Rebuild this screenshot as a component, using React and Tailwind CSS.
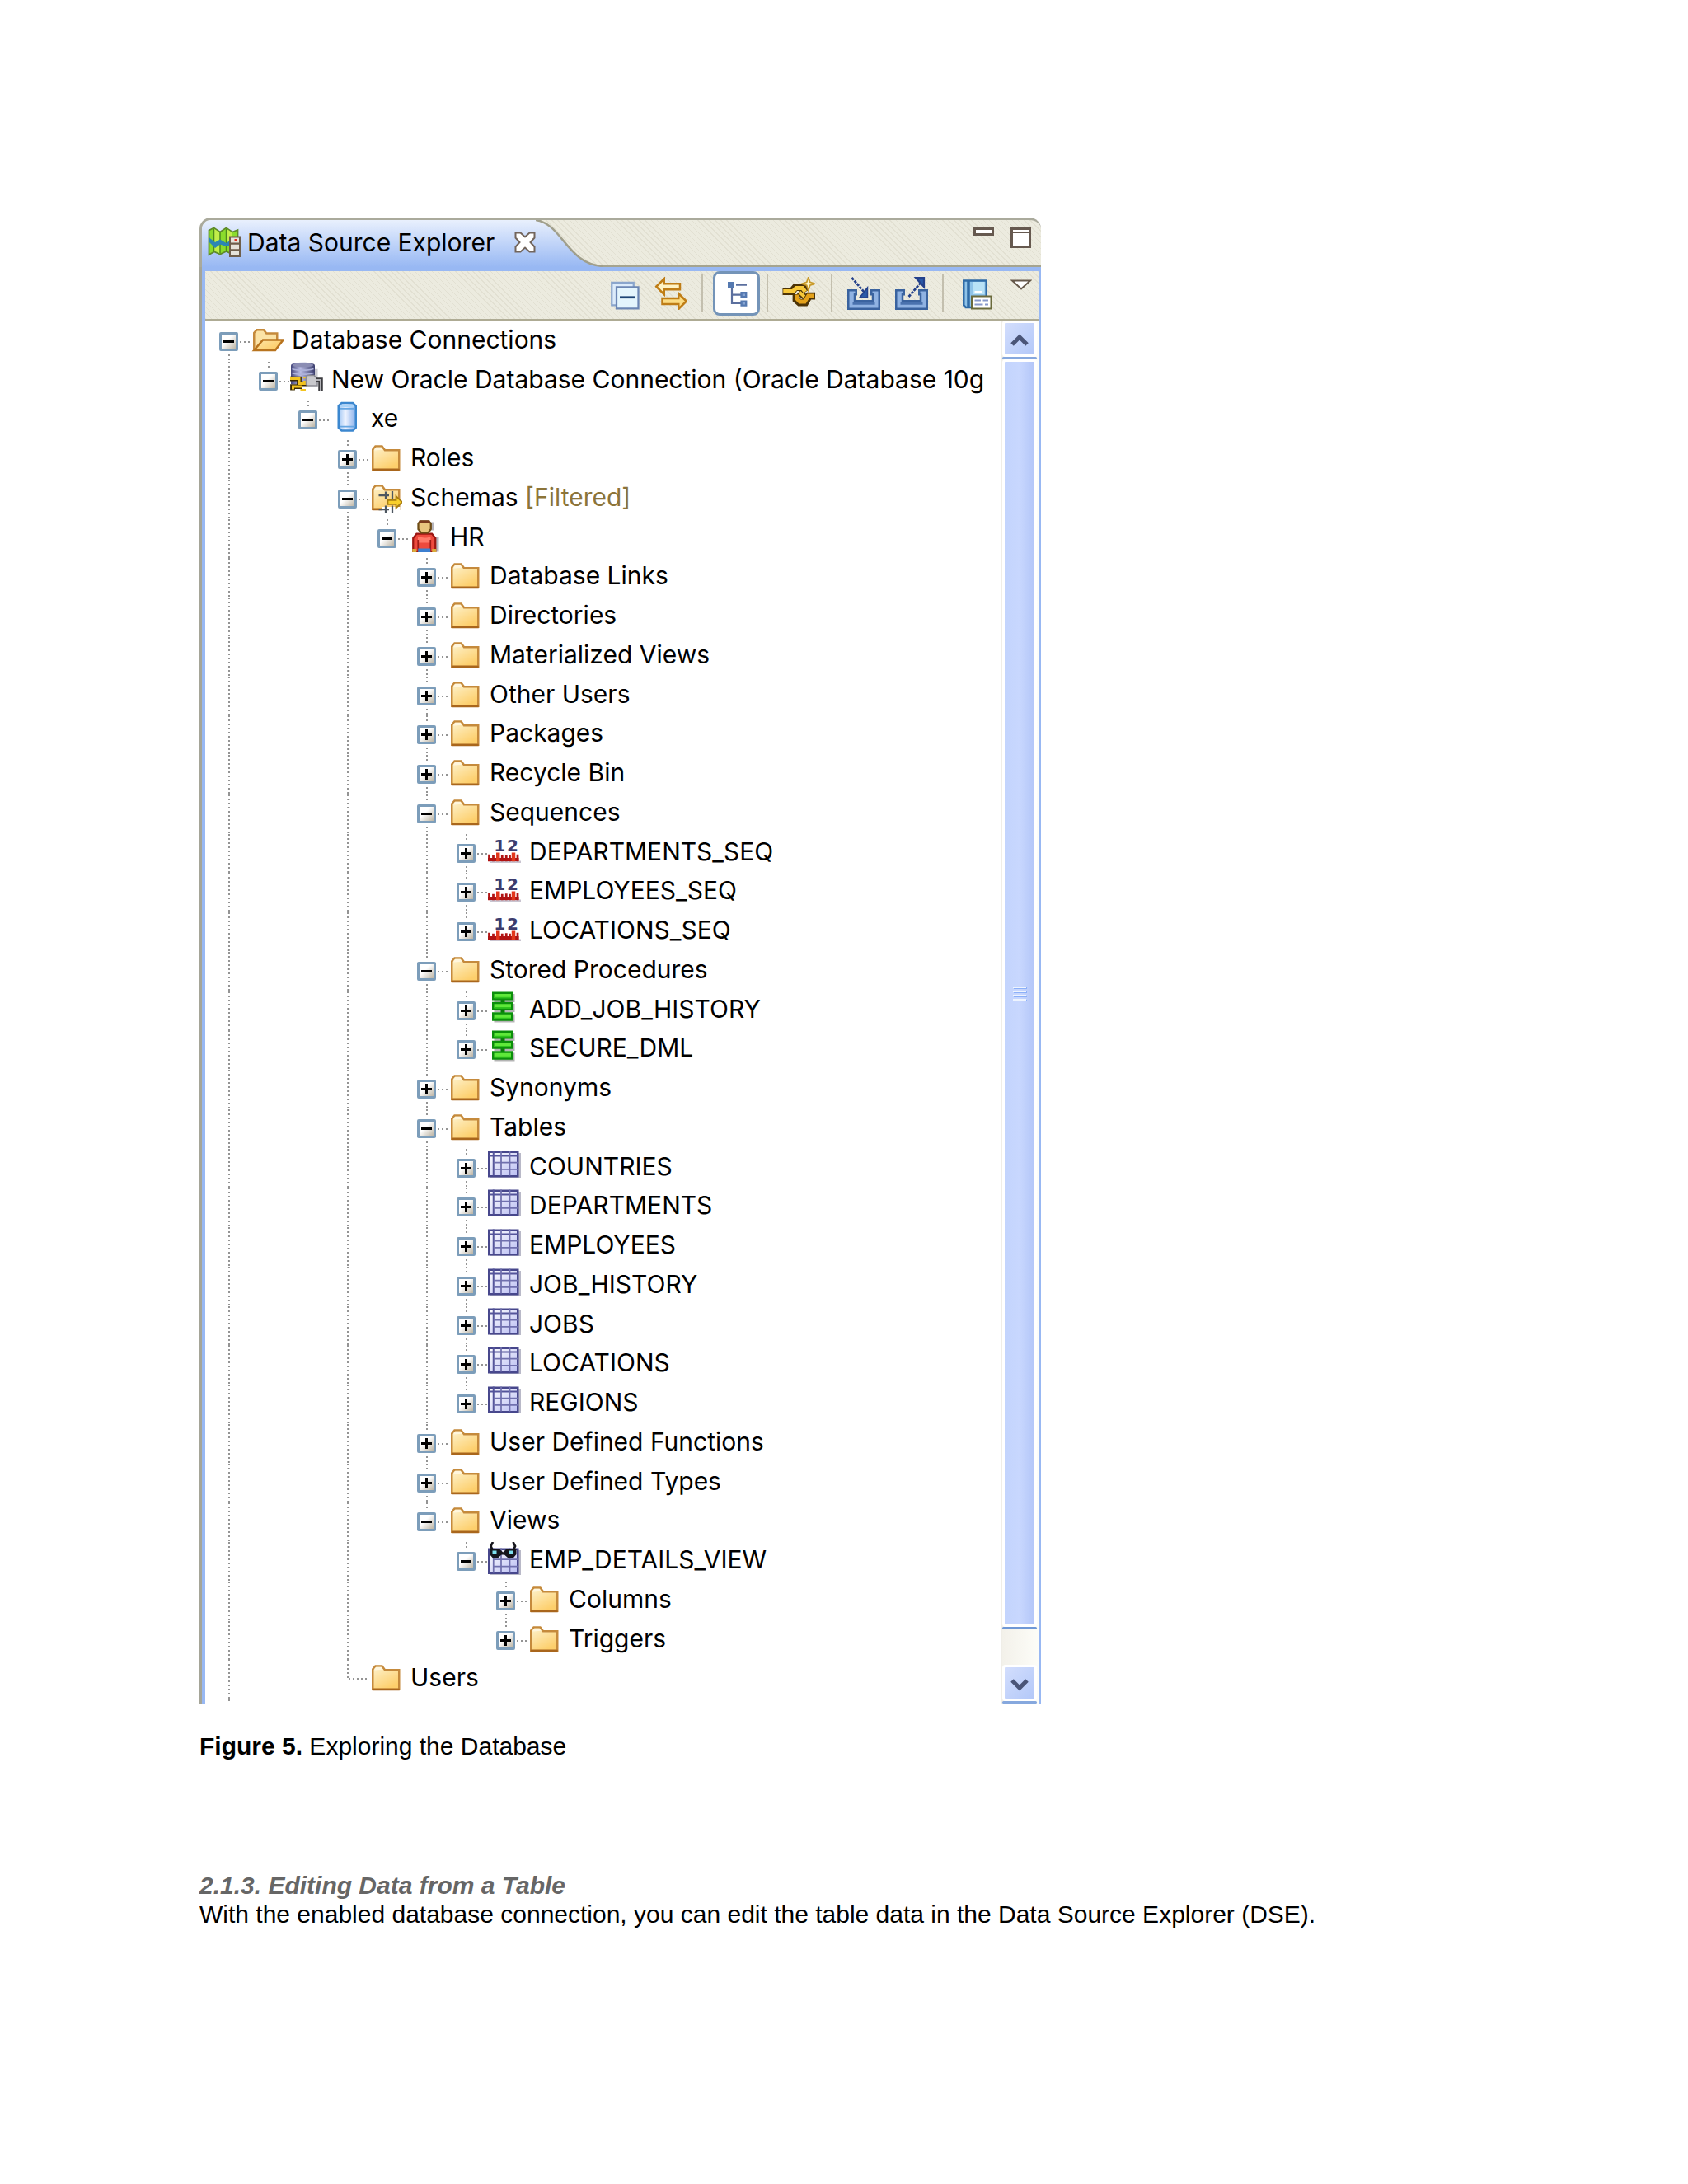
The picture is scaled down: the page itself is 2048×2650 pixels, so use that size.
import { useState } from 'react';

const tree = [
  {
    label: 'Database Connections',
    icon: 'open',
    children: [
      {
        label: 'New Oracle Database Connection (Oracle Database 10g',
        icon: 'oracle',
        children: [
          {
            label: 'xe',
            icon: 'db',
            children: [
              { label: 'Roles', closed: true },
              {
                label: 'Schemas',
                note: '[Filtered]',
                icon: 'filtered',
                children: [
                  {
                    label: 'HR',
                    icon: 'person',
                    children: [
                      { label: 'Database Links', closed: true },
                      { label: 'Directories', closed: true },
                      { label: 'Materialized Views', closed: true },
                      { label: 'Other Users', closed: true },
                      { label: 'Packages', closed: true },
                      { label: 'Recycle Bin', closed: true },
                      {
                        label: 'Sequences',
                        children: [
                          { label: 'DEPARTMENTS_SEQ', icon: 'seq', closed: true },
                          { label: 'EMPLOYEES_SEQ', icon: 'seq', closed: true },
                          { label: 'LOCATIONS_SEQ', icon: 'seq', closed: true },
                        ],
                      },
                      {
                        label: 'Stored Procedures',
                        children: [
                          { label: 'ADD_JOB_HISTORY', icon: 'proc', closed: true },
                          { label: 'SECURE_DML', icon: 'proc', closed: true },
                        ],
                      },
                      { label: 'Synonyms', closed: true },
                      {
                        label: 'Tables',
                        children: [
                          { label: 'COUNTRIES', icon: 'table', closed: true },
                          { label: 'DEPARTMENTS', icon: 'table', closed: true },
                          { label: 'EMPLOYEES', icon: 'table', closed: true },
                          { label: 'JOB_HISTORY', icon: 'table', closed: true },
                          { label: 'JOBS', icon: 'table', closed: true },
                          { label: 'LOCATIONS', icon: 'table', closed: true },
                          { label: 'REGIONS', icon: 'table', closed: true },
                        ],
                      },
                      { label: 'User Defined Functions', closed: true },
                      { label: 'User Defined Types', closed: true },
                      {
                        label: 'Views',
                        children: [
                          {
                            label: 'EMP_DETAILS_VIEW',
                            icon: 'view',
                            children: [
                              { label: 'Columns', closed: true },
                              { label: 'Triggers', closed: true },
                            ],
                          },
                        ],
                      },
                    ],
                  },
                ],
              },
              { label: 'Users' },
            ],
          },
        ],
      },
    ],
  },
];

// one entry per visible row; guides[i] says if the line of level i runs through it
function flatten(nodes, guides = []) {
  return nodes.flatMap((node, i) => {
    const root = guides.length === 0;
    const more = root || i < nodes.length - 1;
    return [{ ...node, guides, more, root }, ...flatten(node.children ?? [], [...guides, more])];
  });
}

const rows = flatten(tree);

const dotsY = 'w-[2px] bg-[repeating-linear-gradient(180deg,#949494_0_2px,transparent_2px_5px)]';
const dotsX = 'h-[2px] bg-[repeating-linear-gradient(90deg,#949494_0_2px,transparent_2px_5px)]';
const canvas = 'bg-[#ecebdf] bg-[repeating-linear-gradient(45deg,#e2e0d2_0_1px,transparent_1px_5px)]';

/* ---------- tree icons, all on a 16 unit grid ---------- */

function Svg({ children, className = 'size-10' }) {
  return (
    <svg viewBox="0 0 16 16" className={`${className} shrink-0`} fill="none" aria-hidden="true">
      {children}
    </svg>
  );
}

function FolderShape() {
  return (
    <>
      <path d="M1.7 14.3V4.6L3 3h3.2l1.4 1.9h6.9v9.4z" fill="url(#folder)" stroke="#c58a3c" />
      <path d="M2.6 5V4.2l.8-.7h2.4l.9 1.2z" fill="#fff6dd" />
      <path d="M1.5 14.4h13.2" stroke="#a9661c" />
    </>
  );
}

function TableShape() {
  return (
    <>
      <path d="M1 2h15v12H1z" fill="#b9b9c8" />
      <path d="M.5 1.5h14v11.8H.5z" fill="url(#cells)" stroke="#47478c" />
      <path d="M.5 3.4h14M2.7 1v12" stroke="#54549a" strokeWidth=".8" />
      <path d="M2.7 6.6h12M2.7 9.9h12M6.4 1v12M10.6 1v12" stroke="#7070ae" strokeWidth=".7" />
    </>
  );
}

const icons = {
  folder: <FolderShape />,
  open: (
    <>
      <path d="M1.7 13.4V5.2L3 3.7h3.4l1.3 1.7h5.2v3" fill="#fbe3a6" stroke="#c58a3c" />
      <path d="M1.7 13.6L6 8.6h9.8L12 13.6z" fill="url(#folder)" stroke="#b8741f" />
    </>
  ),
  oracle: (
    <>
      <path d="M12 3.5h1.4V11H12z" fill="#c9c9cf" />
      <path d="M.4 1.8C.4-.2 12-.2 12 1.8v9H.4z" fill="url(#drum)" />
      <path d="M1 3.4c2 .9 8 .9 10.4 0M1 5.4c2 .9 8 .9 10.4 0" stroke="#aeb2da" strokeWidth=".7" />
      <ellipse cx="6.2" cy="1.6" rx="5" ry="1" fill="#8b8db4" />
      <path d="M0 8.2h4.4v2.4H8M1.2 13.8V12h4.6" stroke="#3b2a00" strokeWidth="2.3" />
      <path d="M0 8.2h4.4v2.4H8M1.4 13.4V12h4.6M5 13.8h2.6" stroke="#f3c420" strokeWidth="1.2" />
      <path d="M6.4 7.6h2M6.4 9.6h2" stroke="#f3c420" strokeWidth=".9" />
      <path d="M8.4 6.6h3.2l1.6 1.6v3.4H8.6L7.8 11V7.4z" fill="#c9c9cd" stroke="#8b8b92" strokeWidth=".6" />
      <path d="M12.6 8.8h2.2v5.6" stroke="#3c3c40" strokeWidth="2.2" />
      <path d="M12.6 8.8h2.2v5.2" stroke="#b4b4b8" strokeWidth=".8" />
    </>
  ),
  db: (
    <>
      <path d="M4.3 2.6L5.8 1.2h5.4l1.5 1.4v10.6l-1.5 1.4H5.8l-1.5-1.4z" fill="url(#tube)" stroke="#3b87cf" />
      <path d="M5.4 1.9h6.2v1.4H5.4z" fill="#a9d3f8" />
      <path d="M4.8 3.9h7.4M4.8 12.6h7.4" stroke="#66a6e2" strokeWidth=".7" />
    </>
  ),
  filtered: (
    <>
      <FolderShape />
      <path d="M6 13.2h9v2H6z" fill="#fff" />
      <path d="M4.6 7.6h5M8 5.8v3.6M11.2 5.6v4M4.6 14.4h5M8 12.6V16M11.2 12.6V16" stroke="#4d5660" strokeWidth=".9" />
      <path d="M9 9.9h4V8l3 2.9-3 2.9v-1.9H9z" fill="#f8cf2a" stroke="#a87d10" strokeWidth=".7" />
    </>
  ),
  person: (
    <>
      <path d="M10 1.4h2v4h-2zM12.6 8.4h2v7.4h-2z" fill="#b5b5bd" />
      <path d="M2.1 15.6V9.2L3.8 7h7.4l1.7 2.2v6.4z" fill="#ee4a3e" stroke="#9b1612" strokeWidth=".9" />
      <path d="M4.4 8.4c2 .8 4.4.8 6.2 0v3H4.4z" fill="#ff7a6a" />
      <path d="M4.5 10v5.6M10.5 10v5.6" stroke="#a11a16" strokeWidth=".7" />
      <path d="M4.5 14.2h6V16h-6z" fill="#3c7fd0" />
      <path d="M1.7 14.4h2V16h-2zM11.3 14.4h2V16h-2z" fill="#d9ac3a" />
      <path d="M5.6.9h4L10.7 2v2.8L9.5 6.5H5.9L4.6 4.8V2z" fill="#e9c67e" stroke="#6d4c16" strokeWidth=".9" />
      <path d="M5 .6h5.2v1H5z" fill="#7a3a1c" />
    </>
  ),
  seq: (
    <>
      <path d="M1 13h15v1H1z" fill="#c9c4d0" />
      <text x="2.9" y="8.3" fill="#3c3c6e" className="font-['DejaVu_Sans'] text-[8px] font-bold">1</text>
      <text x="9.2" y="8.3" fill="#3c3c6e" className="font-['DejaVu_Sans'] text-[8px] font-bold">2</text>
      <path d="M0 12.4h15" stroke="#b01313" strokeWidth="1.6" />
      <path d="M.6 13.3v-3.4M2.6 13.3v-3M6.9 13.3v-3M8.9 13.3v-3.2M10.6 13.3v-3M14.4 13.3v-3.4" stroke="#b01313" strokeWidth="1.1" />
      <path d="M4.9 13.3V9M12.4 13.3V9" stroke="#e2361b" strokeWidth="1.8" />
    </>
  ),
  proc: (
    <>
      <path d="M3 1.2h10v4H3zM3 6h10v4H3zM3 11h10v4H3z" fill="#b4b4b4" />
      <path d="M7.2 3.5v8" stroke="#0a7d0a" strokeWidth="2" />
      <path d="M2.5.7h9.2v3H2.5zM2.5 5.6h9.2v3H2.5zM2.5 10.6h9.2v3.2H2.5z" fill="#5fe83a" stroke="#0b8f0b" />
      <path d="M3 3h8.2M3 7.9h8.2M3 13h8.2" stroke="#2cc41c" strokeWidth=".7" />
    </>
  ),
  table: <TableShape />,
  view: (
    <>
      <path d="M1 4h15v12H1z" fill="#b9b9c8" />
      <path d="M.5 3.5h14v11.6H.5z" fill="url(#cells)" stroke="#47478c" />
      <path d="M2.7 3v12M2.7 8.4h12M2.7 11.8h12M6.4 3v12M10.6 3v12" stroke="#7070ae" strokeWidth=".7" />
      <path d="M2.2 3.8L1.4 2 2.4 0M12.4 3.8l.8-1.800L12.200 0" stroke="#15151c" strokeWidth="1.1" />
      <path d="M.8 3.4h4.8l1.700 1.600L9 3.400h4.800v2.600L12.400 7.600H9.600L8 6.200H6.600L5 7.600H2.200L.8 6z" fill="#15151c" />
      <path d="M2.2 4.2h2v1.800h-2zM10 4.200h2v1.800h-2z" fill="#7fe0ee" />
    </>
  ),
};

function Defs() {
  return (
    <svg className="size-0" aria-hidden="true">
      <defs>
        <linearGradient id="folder" gradientUnits="userSpaceOnUse" x1="4" y1="4" x2="9" y2="14">
          <stop offset="0" stopColor="#fdeec2" />
          <stop offset="1" stopColor="#fdcf6c" />
        </linearGradient>
        <linearGradient id="cells" x1="0" y1="0" x2="1" y2="1">
          <stop offset="0" stopColor="#ffffff" />
          <stop offset="1" stopColor="#b9bdf2" />
        </linearGradient>
        <linearGradient id="drum" x1="0" y1="0" x2="1" y2="0">
          <stop offset="0" stopColor="#44467c" />
          <stop offset=".4" stopColor="#b9bce4" />
          <stop offset="1" stopColor="#3a3c6c" />
        </linearGradient>
        <linearGradient id="tube" x1="0" y1="0" x2="1" y2="0">
          <stop offset="0" stopColor="#9cc4f3" />
          <stop offset=".4" stopColor="#eef3ff" />
          <stop offset="1" stopColor="#86aeea" />
        </linearGradient>
        <linearGradient id="tab" x1="0" y1="0" x2="0" y2="1">
          <stop offset="0" stopColor="#e9f0fd" />
          <stop offset="1" stopColor="#98b8f3" />
        </linearGradient>
      </defs>
    </svg>
  );
}

function Toggle({ closed, label }) {
  const [plus, setPlus] = useState(closed);
  return (
    <button
      type="button"
      aria-label={`Toggle ${label}`}
      onClick={() => setPlus(!plus)}
      className="mt-[2px] mb-1 size-[23px] shrink-0 rounded-[2px] border-[3px] border-[#7c9dba] bg-linear-to-br from-white from-40% to-[#bdb5a5]"
    >
      <svg viewBox="0 0 17 17" className="size-[17px]" stroke="#000" strokeWidth="3" aria-hidden="true">
        <path d={plus ? 'M2 8.5h13M8.5 2v13' : 'M2 8.5h13'} />
      </svg>
    </button>
  );
}

function TreeRow({ node }) {
  const leaf = !node.children && !node.closed;
  return (
    <li role="treeitem" aria-level={node.guides.length + 1} className="flex items-start">
      {node.guides.map((on, i) => (
        <span key={i} className="w-12 shrink-0 self-stretch pl-[11px]">
          {on && <span className={`block h-full ${dotsY}`} />}
        </span>
      ))}
      {leaf ? (
        <span className="flex w-[38px] shrink-0 pl-[11px]">
          <span className={`h-6 shrink-0 ${dotsY}`} />
          <span className={`mt-[22px] w-[25px] ${dotsX}`} />
        </span>
      ) : (
        <span className="flex w-[38px] shrink-0 gap-[2px] self-stretch">
          <span className="flex flex-col items-center">
            <span className={`h-[10px] shrink-0 ${node.root ? '' : dotsY}`} />
            <Toggle closed={!!node.closed} label={node.label} />
            {node.more && <span className={`flex-1 ${dotsY}`} />}
          </span>
          <span className={`mt-[23px] w-[12px] ${dotsX}`} />
        </span>
      )}
      <Svg>{icons[node.icon ?? 'folder']}</Svg>
      <span className="ml-[10px] text-[30px] leading-[42px] whitespace-nowrap">
        {node.label}
        {node.note && <span className="text-[#8c7439]"> {node.note}</span>}
      </span>
    </li>
  );
}

/* ---------- toolbar ---------- */

function ToolButton({ label, className = '', children }) {
  return (
    <button type="button" aria-label={label} className={`shrink-0 ${className}`}>
      {children}
    </button>
  );
}

function Separator() {
  return <span className="h-[46px] w-[2px] shrink-0 bg-[#c3bfae]" />;
}

function Tray({ children }) {
  return (
    <Svg>
      <path d="M.5 6.5h3.8v2h-.7v3.2h8.800V8.500h-.7v-2h3.800v9H.5z" fill="#8fb2e2" stroke="#3a639f" />
      <path d="M2.600 12.900h10.800" stroke="#4a72ae" strokeWidth="1.200" />
      {children}
    </Svg>
  );
}

function Toolbar() {
  return (
    <div className={`flex h-[60px] items-start justify-end border-b-2 border-[#aeab94] pr-2 ${canvas}`}>
      <div className="flex h-[54px] items-center">
        <ToolButton label="Collapse All" className="mr-4">
          <Svg>
            <path d="M1.7 2.7h10.600v11H1.700z" fill="#dcebfa" stroke="#8aa5cc" strokeWidth=".9" />
            <path d="M4 4.900h10.600v10.400H4z" fill="#e4f5fd" stroke="#6c87b4" strokeWidth=".9" />
            <path d="M5.600 9.900h7.400" stroke="#1d4475" strokeWidth="1.100" />
          </Svg>
        </ToolButton>
        <ToolButton label="Link with Editor" className="mr-[17px]">
          <Svg>
            <path d="M.9 4.700L4.700.9v2.400h7.700v2.800H4.700v2.400z" fill="#fff3c4" stroke="#bf7d16" />
            <path d="M15.500 11.800L11.700 8v2.400H3.800v2.800h7.900v2.400z" fill="#fbdc84" stroke="#bf7d16" />
          </Svg>
        </ToolButton>
        <Separator />
        <ToolButton
          label="Show Category"
          className="mr-2 ml-3 flex h-[54px] w-[57px] items-center justify-center rounded-lg border-[3px] border-[#7494b8] bg-white"
        >
          <Svg className="size-8">
            <path d="M5 4v10h6M5 8.800h6M7.500 2.800h6.500" stroke="#5b6f9e" strokeWidth="1.100" />
            <path d="M2.500 1h3.900v3.700H2.500zM10.200 7h4v3.800h-4zM10.200 12.200h4v3.700h-4z" fill="#5579b0" />
            <path d="M11.400 8.200h1.600v1.300h-1.600zM11.400 13.400h1.600v1.300h-1.600z" fill="#86a4d2" />
          </Svg>
        </ToolButton>
        <Separator />
        <ToolButton label="New Connection Profile" className="mr-[19px] ml-[17px]">
          <Svg>
            <path d="M.2 7h4.600l1.600-2h4l1.400 2M16 9.200h-3l-1.800 3.200H8.400L6.800 11V8.400" stroke="#4c3306" strokeWidth="3.500" />
            <path d="M8.200 7.200l2.800 2.600" stroke="#4c3306" strokeWidth="3" />
            <path d="M.5 7h4.700l1.600-1.600h3l1.400 1.800" stroke="#f7c83a" strokeWidth="2" />
            <path d="M15.600 9.200h-2.900l-1.800 2.800H8.600L7.200 10.600V8.600" stroke="#e3a11a" strokeWidth="2" />
            <path d="M8.400 7.400l2.400 2.200" stroke="#f7c83a" strokeWidth="1.500" />
            <path d="M12.700.2l.8 2.300 2.300.8-2.300.8-.8 2.500-.8-2.500-2.300-.8 2.300-.8z" fill="#fff8cc" stroke="#c99a2a" strokeWidth=".7" />
          </Svg>
        </ToolButton>
        <Separator />
        <ToolButton label="Import" className="mr-[18px] ml-[18px]">
          <Tray>
            <path d="M2.200.4l6 7" stroke="#24418b" strokeWidth="1.100" strokeDasharray="1.400 .5" />
            <path d="M9.800 5.200v4.800H6z" fill="#2a5aa8" stroke="#24418b" strokeWidth=".6" />
          </Tray>
        </ToolButton>
        <ToolButton label="Export" className="mr-[17px]">
          <Tray>
            <path d="M6.600 9.600l6-7" stroke="#24418b" strokeWidth="1.100" strokeDasharray="1.400 .5" />
            <path d="M10 .4h4v4.400z" fill="#2a5aa8" stroke="#24418b" strokeWidth=".9" />
          </Tray>
        </ToolButton>
        <Separator />
        <ToolButton label="Saved Profiles" className="mr-5 ml-[21px]">
          <Svg>
            <path d="M1.300 1.800h11v13H2.300l-1-1z" fill="#8fc3e8" stroke="#2f6ba6" />
            <path d="M3.600 2v13" stroke="#2f6ba6" strokeWidth="1.400" />
            <path d="M5.600 2.400h5.800v6H5.600z" fill="#b9e2f6" />
            <path d="M6.600 7.200h3.600" stroke="#fff" strokeWidth=".8" />
            <path d="M5.200 9.400h9.400v6H5.200z" fill="#fff" stroke="#6a6a3c" strokeWidth=".8" />
            <path d="M6.600 11.400h3M10.600 11.400h2.600M6.600 13.400h4M11.600 13.400h1.600" stroke="#8899cc" strokeWidth=".8" />
          </Svg>
        </ToolButton>
        <ToolButton label="View Menu" className="self-start pt-[10px]">
          <svg viewBox="0 0 26 13" className="h-[13px] w-[26px]" aria-hidden="true">
            <path d="M2 1.500h22L13 11.500z" fill="#fff" stroke="#66594a" strokeWidth="2" />
          </svg>
        </ToolButton>
      </div>
    </div>
  );
}

/* ---------- view tab ---------- */

function TabBar() {
  return (
    <div className={`flex h-[60px] rounded-t-[14px] border-[3px] border-r-0 border-b-0 border-[#aaaa9c] ${canvas}`}>
      <div className="flex items-center rounded-tl-[11px] bg-linear-to-b from-[#e9f0fd] to-[#98b8f3] pb-1 pl-[7px]">
        <Svg>
          <path d="M.6 2.200L3 1l3 2 3-2 3 2 2.600-1v10.600L12 13.800 9 12.400l-3 1.400-2.800-1.200L.6 14z" fill="#8bdc2c" stroke="#5f8a2a" strokeWidth=".7" />
          <path d="M3 1.400l3 2v10L3.200 12zM9 1.400l3 2v6H9z" fill="#c2ee4a" />
          <path d="M3 1.400v10.800M6 3v10.400M9 1.400v11" stroke="#4c8b1c" strokeWidth=".6" />
          <path d="M.6 5.600l3 2.400 2.400-1.400 3 1.800 2-1.400v2.400l-2 .6-3-1-2.400 1.800-3-3z" fill="#2c86b4" />
          <path d="M10.800 5.400h4.800v9.400h-4.800z" fill="#e6e3da" stroke="#6f5f4c" strokeWidth=".8" />
          <path d="M10.800 8.600h4.800M10.800 11.700h4.800" stroke="#6f5f4c" strokeWidth=".9" />
          <path d="M13 6.400h1.200v1H13z" fill="#e0301e" />
        </Svg>
        <span className="ml-2 text-[30px] leading-[42px]">Data Source Explorer</span>
        <button type="button" aria-label="Close" className="ml-6">
          <svg viewBox="0 0 26 26" className="size-[26px]" aria-hidden="true">
            <path
              d="M1.500 1.500h6l5.500 5 5.500-5h6v6l-5 5.500 5 5.500v6h-6l-5.500-5-5.500 5h-6v-6l5-5.500-5-5.500z"
              fill="#fff"
              stroke="#72655c"
              strokeWidth="2"
            />
          </svg>
        </button>
      </div>
      <svg viewBox="0 0 82 57" className="h-[57px] w-[82px] shrink-0" aria-hidden="true">
        <path d="M0 0C32 4 38 54 82 56v1H0z" fill="url(#tab)" />
        <path d="M0 0C32 4 38 54 82 56" fill="none" stroke="#a09f8c" strokeWidth="2.500" />
      </svg>
      <div className="flex flex-1 items-start justify-end gap-5 border-b-2 border-[#a5a48f] pt-[9px] pr-3">
        <button type="button" aria-label="Minimize" className="h-[10px] w-[25px] border-[3px] border-[#66594f] bg-white" />
        <button
          type="button"
          aria-label="Maximize"
          className="flex size-[25px] flex-col border-[3px] border-[#66594f] bg-white pt-[2px]"
        >
          <span className="h-[2px] w-full bg-[#66594f]" />
        </button>
      </div>
    </div>
  );
}

function Scrollbar() {
  const cap =
    'flex h-[44px] w-full shrink-0 items-center justify-center rounded-[4px] border-[3px] border-white bg-linear-to-br from-[#d3defd] to-[#b3c8f8] pt-[3px]';
  return (
    <div className="flex w-[46px] shrink-0 flex-col border-l-2 border-[#f0eee8] bg-linear-to-r from-[#f3f1ea] to-[#fdfdf8] pr-[2px]">
      <button type="button" aria-label="Scroll up" className={cap}>
        <svg viewBox="0 0 22 16" className="h-4 w-[22px]" fill="none" stroke="#4a5578" strokeWidth="5" aria-hidden="true">
          <path d="M2 13l9-9 9 9" />
        </svg>
      </button>
      <span className="h-[3px] w-full shrink-0 rounded-full bg-[#86a8de]" />
      <div className="flex w-full flex-1 flex-col items-center justify-center gap-[3px] rounded-[4px] border-[3px] border-white bg-linear-to-r from-[#c3d4fd] via-[#c8d7fe] to-[#b3c6f8]">
        {[0, 1, 2, 3].map((i) => (
          <span key={i} className="h-[2px] w-4 bg-[#eef4fe] shadow-[1px_1px_0_#8cb0f8]" />
        ))}
      </div>
      <span className="h-[3px] w-full shrink-0 rounded-full bg-[#6f98d6]" />
      <span className="h-[43px] shrink-0" />
      <button type="button" aria-label="Scroll down" className={cap}>
        <svg viewBox="0 0 22 16" className="h-4 w-[22px]" fill="none" stroke="#4a5578" strokeWidth="5" aria-hidden="true">
          <path d="M2 3l9 9 9-9" />
        </svg>
      </button>
      <span className="h-[3px] w-full shrink-0 rounded-full bg-[#86a8de]" />
    </div>
  );
}

function DataSourceExplorer() {
  return (
    <section className="w-full max-w-[1021px] font-['Inter',sans-serif] text-black">
      <Defs />
      <TabBar />
      <div className="border-l-[3px] border-[#a5a598]">
        <div className="border-t-[5px] border-r-[3px] border-l-4 border-[#98b8f3]">
          <Toolbar />
          <div className="flex bg-white">
            <div className="min-w-0 flex-1 overflow-hidden pt-[2px] pl-[17px]">
              <ul role="tree" aria-label="Data sources" className="grid h-[1671px] auto-rows-fr">
                {rows.map((node) => (
                  <TreeRow key={node.guides.length + node.label} node={node} />
                ))}
              </ul>
              <div className={`ml-[11px] h-[5px] ${dotsY}`} />
            </div>
            <Scrollbar />
          </div>
        </div>
      </div>
    </section>
  );
}

export default function App() {
  return (
    <main className="bg-white px-[242px] pt-[264px] pb-[310px] font-['Liberation_Sans',Arial,sans-serif] text-[30px] leading-[35px] text-black">
      <figure>
        <DataSourceExplorer />
        <figcaption className="mt-[34px]">
          <b>Figure 5.</b> Exploring the Database
        </figcaption>
      </figure>
      <h3 className="mt-[134px] font-bold text-[#666] italic">2.1.3. Editing Data from a Table</h3>
      <p>
        With the enabled database connection, you can edit the table data in the Data Source Explorer (DSE).
      </p>
    </main>
  );
}
